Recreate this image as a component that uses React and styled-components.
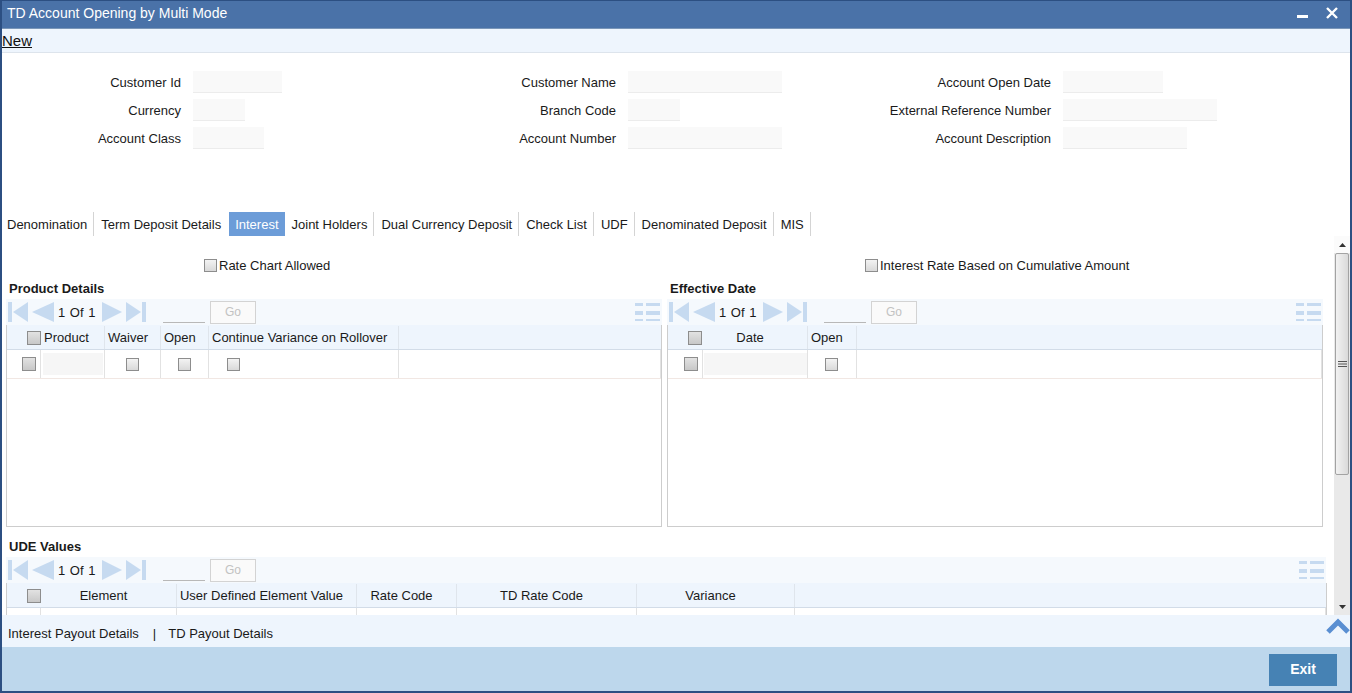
import React from "react";
import styled, { createGlobalStyle } from "styled-components";

const GlobalStyle = createGlobalStyle`
  * { box-sizing: border-box; }
  html, body { margin: 0; padding: 0; background: #fff; }
  body { font-family: "Liberation Sans", Arial, sans-serif; font-size: 13px; color: #1a1a1a; }
`;

const NAV = "#c6daf0";

// ---------- window frame ----------
const Window = styled.div`
  width: 1352px;
  height: 693px;
  display: flex;
  flex-direction: column;
  border-left: 2px solid #2c4f82;
  border-right: 2px solid #2c4f82;
  border-bottom: 2px solid #2c4f82;
  overflow: hidden;
`;

const TitleBar = styled.div`
  height: 28px;
  flex: none;
  display: flex;
  align-items: center;
  background: #4a72a8;
  border-top: 1px solid #2c4f82;
  padding: 0 12px 3px 5px;
  color: #fff;
`;

const Title = styled.div`
  font-size: 14px;
  flex: 1;
`;

const WinButtons = styled.div`
  display: flex;
  align-items: center;
  gap: 18px;
`;

const MenuBar = styled.div`
  height: 25px;
  flex: none;
  display: flex;
  align-items: center;
  background: #eef5fd;
  border-bottom: 1px solid #dde4ec;
  border-top: 1px solid #7a96b8;
`;

const MenuLink = styled.span`
  font-size: 15px;
  text-decoration: underline;
  color: #111;
`;

// ---------- header form ----------
const Form = styled.div`
  flex: none;
  display: grid;
  grid-template-columns: repeat(3, 435px);
  padding-top: 18px;
  height: 159px;
`;

const FormColumn = styled.div`
  display: flex;
  flex-direction: column;
  gap: 6px;
`;

const FieldRow = styled.div`
  display: grid;
  grid-template-columns: 179px 1fr;
  column-gap: 12px;
  align-items: center;
  height: 22px;
`;

const Label = styled.label`
  text-align: right;
  white-space: nowrap;
`;

const TextBox = styled.div`
  width: ${(p) => p.w}px;
  height: 22px;
  background: #f9f9f9;
  border-bottom: 1px solid #ececec;
`;

// ---------- tabs ----------
const Tabs = styled.div`
  flex: none;
  height: 24px;
  display: flex;
  align-items: stretch;
`;

const Tab = styled.div`
  display: flex;
  align-items: center;
  padding: 0 6px 0 ${(p) => (p.first ? 5 : 7)}px;
  ${(p) => (p.active ? "padding: 0 6px; margin-left: 2px;" : "")}
  background: ${(p) => (p.active ? "#6c9cd8" : "transparent")};
  color: ${(p) => (p.active ? "#fff" : "#1a1a1a")};
  border-right: ${(p) => (p.active || p.beforeActive ? "none" : "1px solid #d4d4d4")};
  white-space: nowrap;
`;

// ---------- body ----------
const Body = styled.div`
  flex: none;
  height: 379px;
  display: flex;
`;

const Scroller = styled.div`
  flex: 1;
  overflow: hidden;
  padding-left: 4px;
`;

const HalfGrid = styled.div`
  display: grid;
  grid-template-columns: 656px 656px;
  column-gap: 5px;
`;

const OptionRow = styled(HalfGrid)`
  margin-top: 22px;
  height: 14px;
`;

const Option = styled.div`
  display: flex;
  align-items: center;
  gap: 2px;
  padding-left: 198px;
  white-space: nowrap;
`;

const Panels = styled(HalfGrid)`
  margin-top: 9px;
`;

const Panel = styled.div`
  display: flex;
  flex-direction: column;
`;

const SectionTitle = styled.div`
  font-weight: bold;
  height: 16px;
  line-height: 16px;
  padding-left: 3px;
  margin-top: ${(p) => p.top || 0}px;
  margin-bottom: 2px;
`;

const Toolbar = styled.div`
  height: 26px;
  display: flex;
  align-items: center;
  background: #f5f9fd;
  padding-left: 2px;
  padding-right: 2px;
  width: ${(p) => (p.w ? p.w + "px" : "auto")};
`;

const NavGroup = styled.div`
  display: flex;
  align-items: center;
  gap: 4px;
`;

const PageText = styled.span`
  width: 40px;
  word-spacing: 1px;
`;

const GoInput = styled.div`
  width: 42px;
  height: 22px;
  margin-left: 17px;
  border-bottom: 1px solid #b8b8b8;
`;

const GoButton = styled.div`
  width: 46px;
  height: 23px;
  margin-left: 5px;
  border: 1px solid #d3d3d3;
  background: #fafafa;
  color: #c2c2c2;
  font-size: 12px;
  display: flex;
  align-items: center;
  justify-content: center;
`;

const MenuIcon = styled.div`
  margin-left: auto;
  display: flex;
`;

const TableBox = styled.div`
  height: ${(p) => p.h}px;
  width: ${(p) => (p.w ? p.w + "px" : "auto")};
  border: 1px solid #cdcdcd;
  border-top: none;
  background: #fff;
`;

const HeadRow = styled.div`
  display: grid;
  grid-template-columns: ${(p) => p.cols};
  height: 25px;
  padding-top: 1px;
  background: #eef5fd;
  border-bottom: 1px solid #d2dce8;
`;

const HeadCell = styled.div`
  display: flex;
  align-items: center;
  justify-content: ${(p) => p.justify || "flex-start"};
  padding: ${(p) => p.pad || "0 0 0 3px"};
  border-right: ${(p) => (p.noline ? "none" : "1px solid #dfe5ec")};
  white-space: nowrap;
`;

const BodyRow = styled.div`
  display: grid;
  grid-template-columns: ${(p) => p.cols};
  height: 29px;
  border-bottom: 1px solid #f1e7e3;
`;

const Cell = styled.div`
  display: flex;
  align-items: center;
  justify-content: ${(p) => p.justify || "center"};
  padding: ${(p) => p.pad || "0"};
  border-right: 1px solid #e2e2e2;
`;

const CellInput = styled.div`
  width: ${(p) => p.w}px;
  height: 22px;
  background: #f6f6f6;
`;

const Check = styled.span`
  display: inline-block;
  flex: none;
  width: ${(p) => p.size || 13}px;
  height: ${(p) => p.size || 13}px;
  border: 1px solid #8d8d8d;
  background: ${(p) =>
    p.dark ? "linear-gradient(#e2e2e2, #c8c8c8)" : "linear-gradient(#f3f3f3, #d9d9d9)"};
`;

// ---------- scrollbar ----------
const ScrollBar = styled.div`
  width: 16px;
  flex: none;
  display: flex;
  flex-direction: column;
  background: #e9e9e9;
`;

const ArrowBox = styled.div`
  height: 17px;
  display: flex;
  align-items: center;
  justify-content: center;
  background: ${(p) => (p.top ? "#fbfbfb" : "#e9e9e9")};
`;

const Thumb = styled.div`
  height: 222px;
  margin: 0 1px;
  border: 1px solid #a3a3a3;
  border-radius: 2px;
  background: linear-gradient(90deg, #f2f2f2, #dadada);
  display: flex;
  align-items: center;
  justify-content: center;
`;

const Track = styled.div`
  flex: 1;
`;

// ---------- footer ----------
const LinkBar = styled.div`
  flex: none;
  height: 32px;
  display: flex;
  align-items: center;
  background: #eef5fd;
  padding-left: 6px;
  padding-top: 4px;
`;

const LinkText = styled.span`
  white-space: nowrap;
`;

const LinkSep = styled.span`
  margin: 0 12px 0 14px;
`;

const Chevron = styled.div`
  margin-left: auto;
  margin-bottom: 14px;
  display: flex;
`;

const ActionBar = styled.div`
  flex: 1;
  display: flex;
  justify-content: flex-end;
  align-items: flex-start;
  background: #bdd7ec;
  padding: 7px 13px 0 0;
`;

const ExitButton = styled.div`
  width: 68px;
  height: 32px;
  padding-bottom: 2px;
  background: #4682b4;
  color: #fff;
  font-weight: bold;
  font-size: 14px;
  display: flex;
  align-items: center;
  justify-content: center;
`;

// ---------- icons ----------
const First = () => (
  <svg width="20" height="20" viewBox="0 0 20 20">
    <rect x="0" y="0" width="4" height="20" fill={NAV} />
    <polygon points="20,0 20,20 5,10" fill={NAV} />
  </svg>
);
const Prev = () => (
  <svg width="22" height="20" viewBox="0 0 22 20">
    <polygon points="22,0 22,20 0,10" fill={NAV} />
  </svg>
);
const Next = () => (
  <svg width="20" height="20" viewBox="0 0 20 20">
    <polygon points="0,0 0,20 20,10" fill={NAV} />
  </svg>
);
const Last = () => (
  <svg width="20" height="20" viewBox="0 0 20 20">
    <polygon points="0,0 0,20 15,10" fill={NAV} />
    <rect x="16" y="0" width="4" height="20" fill={NAV} />
  </svg>
);
const GridMenu = () => (
  <svg width="25" height="20" viewBox="0 0 25 20">
    <rect x="0" y="1" width="8" height="3" fill={NAV} />
    <rect x="11" y="1" width="14" height="3" fill={NAV} />
    <rect x="0" y="9" width="8" height="4" fill={NAV} />
    <rect x="11" y="9" width="14" height="4" fill={NAV} />
    <rect x="0" y="17" width="8" height="2" fill={NAV} />
    <rect x="11" y="17" width="14" height="2" fill={NAV} />
  </svg>
);

const Pager = ({ menu }) => (
  <>
    <NavGroup>
      <First />
      <Prev />
      <PageText>1 Of 1</PageText>
      <Next />
      <Last />
    </NavGroup>
    <GoInput />
    <GoButton>Go</GoButton>
    {menu && (
      <MenuIcon>
        <GridMenu />
      </MenuIcon>
    )}
  </>
);

const fields = [
  [
    ["Customer Id", 89],
    ["Currency", 52],
    ["Account Class", 71],
  ],
  [
    ["Customer Name", 154],
    ["Branch Code", 52],
    ["Account Number", 154],
  ],
  [
    ["Account Open Date", 100],
    ["External Reference Number", 154],
    ["Account Description", 124],
  ],
];

const tabs = [
  "Denomination",
  "Term Deposit Details",
  "Interest",
  "Joint Holders",
  "Dual Currency Deposit",
  "Check List",
  "UDF",
  "Denominated Deposit",
  "MIS",
];

const productCols = "34px 64px 56px 48px 190px 1fr";
const dateCols = "35px 105px 49px 1fr";
const udeCols = "34px 136px 180px 100px 180px 158px 1fr";

const App = () => {
  return (
    <>
      <GlobalStyle />
      <Window>
        <TitleBar>
          <Title>TD Account Opening by Multi Mode</Title>
          <WinButtons>
            <svg width="11" height="12" viewBox="0 0 11 12">
              <rect x="0" y="8" width="11" height="3" fill="#fff" />
            </svg>
            <svg width="12" height="12" viewBox="0 0 12 12">
              <path d="M1 1 L11 11 M11 1 L1 11" stroke="#fff" strokeWidth="2.4" />
            </svg>
          </WinButtons>
        </TitleBar>

        <MenuBar>
          <MenuLink>New</MenuLink>
        </MenuBar>

        <Form>
          {fields.map((col, i) => (
            <FormColumn key={i}>
              {col.map(([label, w]) => (
                <FieldRow key={label}>
                  <Label>{label}</Label>
                  <TextBox w={w} />
                </FieldRow>
              ))}
            </FormColumn>
          ))}
        </Form>

        <Tabs>
          {tabs.map((t, i) => (
            <Tab
              key={t}
              first={i === 0}
              active={t === "Interest"}
              beforeActive={tabs[i + 1] === "Interest"}
            >
              {t}
            </Tab>
          ))}
        </Tabs>

        <Body>
          <Scroller>
            <OptionRow>
              <Option>
                <Check />
                Rate Chart Allowed
              </Option>
              <Option>
                <Check />
                Interest Rate Based on Cumulative Amount
              </Option>
            </OptionRow>

            <Panels>
              <Panel>
                <SectionTitle>Product Details</SectionTitle>
                <Toolbar>
                  <Pager menu />
                </Toolbar>
                <TableBox h={202}>
                  <HeadRow cols={productCols}>
                    <HeadCell justify="flex-end" pad="0" noline>
                      <Check size={14} dark />
                    </HeadCell>
                    <HeadCell>Product</HeadCell>
                    <HeadCell>Waiver</HeadCell>
                    <HeadCell>Open</HeadCell>
                    <HeadCell>Continue Variance on Rollover</HeadCell>
                    <HeadCell noline />
                  </HeadRow>
                  <BodyRow cols={productCols}>
                    <Cell pad="0 0 0 15px" justify="flex-start">
                      <Check size={14} dark />
                    </Cell>
                    <Cell>
                      <CellInput w={60} />
                    </Cell>
                    <Cell>
                      <Check />
                    </Cell>
                    <Cell>
                      <Check />
                    </Cell>
                    <Cell justify="flex-start" pad="0 0 0 18px">
                      <Check />
                    </Cell>
                    <Cell />
                  </BodyRow>
                </TableBox>
              </Panel>

              <Panel>
                <SectionTitle>Effective Date</SectionTitle>
                <Toolbar>
                  <Pager menu />
                </Toolbar>
                <TableBox h={202}>
                  <HeadRow cols={dateCols}>
                    <HeadCell justify="flex-end" pad="0 1px 0 0" noline>
                      <Check size={14} dark />
                    </HeadCell>
                    <HeadCell justify="center" pad="0 10px 0 0">
                      Date
                    </HeadCell>
                    <HeadCell>Open</HeadCell>
                    <HeadCell noline />
                  </HeadRow>
                  <BodyRow cols={dateCols}>
                    <Cell pad="0 0 0 16px" justify="flex-start">
                      <Check size={14} dark />
                    </Cell>
                    <Cell>
                      <CellInput w={103} />
                    </Cell>
                    <Cell justify="flex-start" pad="0 0 0 17px">
                      <Check />
                    </Cell>
                    <Cell />
                  </BodyRow>
                </TableBox>
              </Panel>
            </Panels>

            <SectionTitle top={12}>UDE Values</SectionTitle>
            <Toolbar w={1320}>
              <Pager menu />
            </Toolbar>
            <TableBox h={60} w={1321}>
              <HeadRow cols={udeCols}>
                <HeadCell justify="center" pad="0 0 0 20px" noline>
                  <Check size={14} dark />
                </HeadCell>
                <HeadCell justify="center" pad="0 10px 0 0">Element</HeadCell>
                <HeadCell justify="center" pad="0 10px 0 0">User Defined Element Value</HeadCell>
                <HeadCell justify="center" pad="0 10px 0 0">Rate Code</HeadCell>
                <HeadCell justify="center" pad="0 10px 0 0">TD Rate Code</HeadCell>
                <HeadCell justify="center" pad="0 10px 0 0">Variance</HeadCell>
                <HeadCell noline />
              </HeadRow>
              <BodyRow cols={udeCols}>
                <Cell />
                <Cell />
                <Cell />
                <Cell />
                <Cell />
                <Cell />
                <Cell />
              </BodyRow>
            </TableBox>
          </Scroller>

          <ScrollBar>
            <ArrowBox top>
              <svg width="7" height="4" viewBox="0 0 7 4">
                <polygon points="0,4 7,4 3.5,0" fill="#333" />
              </svg>
            </ArrowBox>
            <Thumb>
              <svg width="9" height="8" viewBox="0 0 9 8">
                <path d="M0 1.5 H9 M0 4 H9 M0 6.5 H9" stroke="#555" strokeWidth="1" />
              </svg>
            </Thumb>
            <Track />
            <ArrowBox>
              <svg width="7" height="4" viewBox="0 0 7 4">
                <polygon points="0,0 7,0 3.5,4" fill="#333" />
              </svg>
            </ArrowBox>
          </ScrollBar>
        </Body>

        <LinkBar>
          <LinkText>Interest Payout Details</LinkText>
          <LinkSep>|</LinkSep>
          <LinkText>TD Payout Details</LinkText>
          <Chevron>
            <svg width="24" height="16" viewBox="0 0 24 16">
              <path d="M2 14 L12 4 L22 14" stroke="#5a8fd2" strokeWidth="5" fill="none" />
            </svg>
          </Chevron>
        </LinkBar>

        <ActionBar>
          <ExitButton>Exit</ExitButton>
        </ActionBar>
      </Window>
    </>
  );
};

export default App;
